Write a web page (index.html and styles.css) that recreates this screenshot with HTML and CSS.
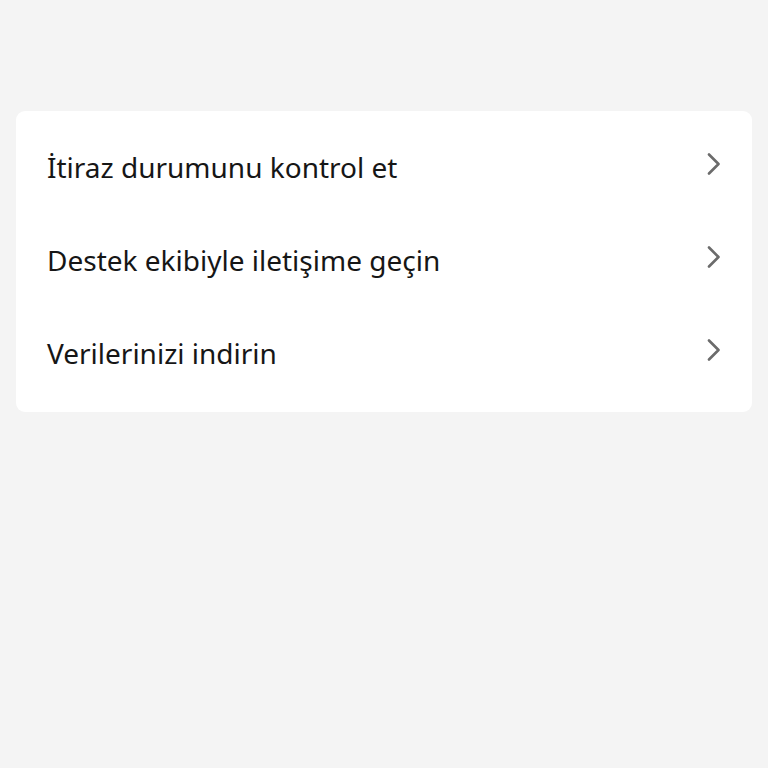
FILE: index.html
```html
<!DOCTYPE html>
<html lang="tr">
<head>
<meta charset="utf-8">
<link rel="stylesheet" href="styles.css">
</head>
<body>
<div class="page">
  <div class="card">
    <div class="row"><span class="label">İtiraz durumunu kontrol et</span><svg class="chev" width="14" height="22" viewBox="0 0 14 22"><path d="M2 1.5 L11.5 11 L2 20.5" fill="none" stroke="#6b6b6b" stroke-width="2.6" stroke-linecap="round" stroke-linejoin="round"/></svg></div>
    <div class="row"><span class="label">Destek ekibiyle iletişime geçin</span><svg class="chev" width="14" height="22" viewBox="0 0 14 22"><path d="M2 1.5 L11.5 11 L2 20.5" fill="none" stroke="#6b6b6b" stroke-width="2.6" stroke-linecap="round" stroke-linejoin="round"/></svg></div>
    <div class="row"><span class="label">Verilerinizi indirin</span><svg class="chev" width="14" height="22" viewBox="0 0 14 22"><path d="M2 1.5 L11.5 11 L2 20.5" fill="none" stroke="#6b6b6b" stroke-width="2.6" stroke-linecap="round" stroke-linejoin="round"/></svg></div>
  </div>
</div>
</body>
</html>
```
FILE: styles.css
```css
html, body {
  margin: 0;
  padding: 0;
  background: #f4f4f4;
  height: 100%;
}
.page {
  padding: 111px 16px 0 16px;
  font-family: "Noto Sans", "Open Sans", sans-serif;
}
.card {
  background: #ffffff;
  border-radius: 9px;
  padding: 11px 0;
  display: flex;
  flex-direction: column;
}
.row {
  height: 93px;
  display: flex;
  align-items: center;
  justify-content: space-between;
  padding: 0 31px 0 31px;
}
.label {
  font-size: 28px;
  line-height: 38px;
  color: #161616;
  margin-bottom: 4px;
}
.chev {
  display: block;
  flex: none;
  margin-bottom: 10px;
}
```
